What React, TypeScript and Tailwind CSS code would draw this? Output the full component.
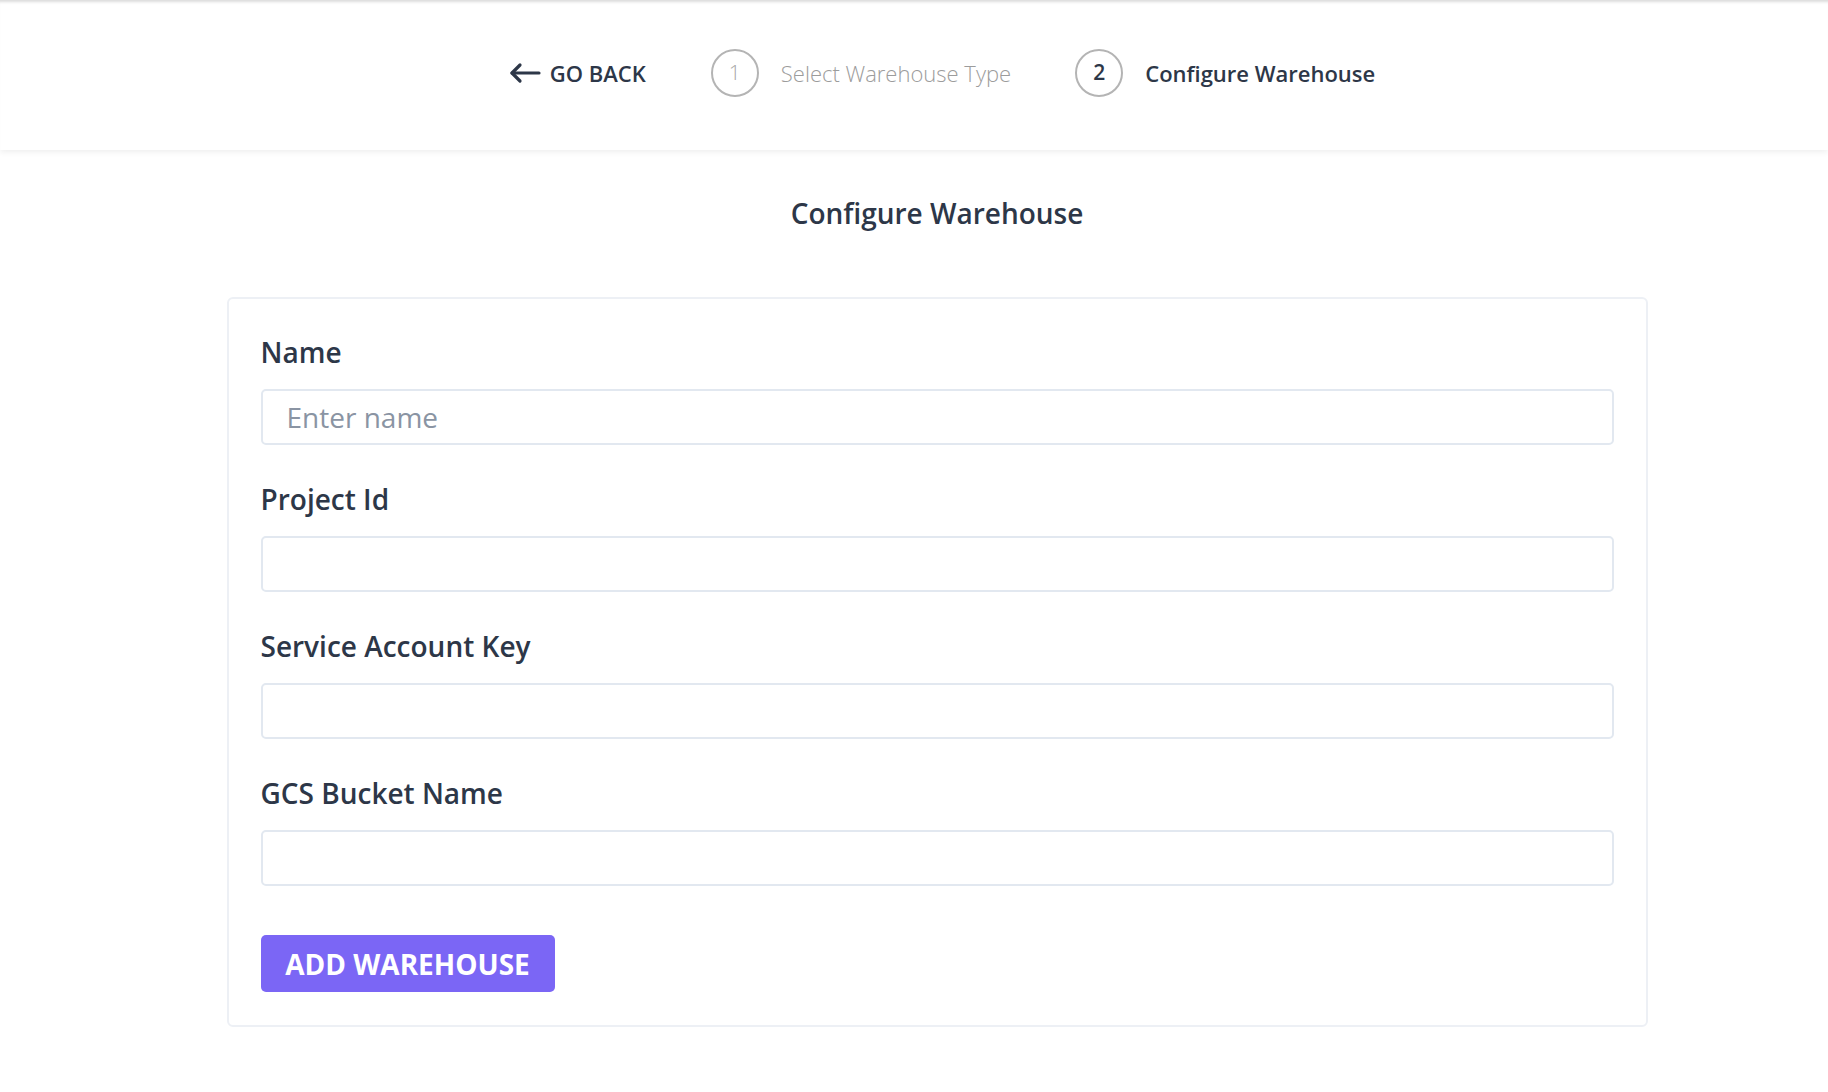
import React from "react";

const font = { fontFamily: '"Open Sans", "Noto Sans", sans-serif' };

function Field({ label, placeholder, last }: { label: string; placeholder?: string; last?: boolean }) {
  return (
    <div className={last ? "flex flex-col" : "flex flex-col mb-[36px]"}>
      <label className="h-[36px] leading-[36px] text-[28px] font-semibold text-[#2d3748] mb-[19px]">{label}</label>
      <input
        className="h-[56px] w-full rounded-[5px] border-2 border-[#e2e8f0] bg-white px-[24px] text-[28px] text-[#2d3748] placeholder:text-[#8a94a3] outline-none"
        placeholder={placeholder}
        style={font}
      />
    </div>
  );
}

export default function App() {
  return (
    <div className="min-h-[1092px] w-[1828px] bg-white" style={font}>
      <header className="h-[150px] w-full flex items-center justify-center pl-[56px] pb-[4px] shadow-[inset_0_4px_3px_-2px_rgba(0,0,0,0.14),0_2px_6px_rgba(0,0,0,0.07)]">
        <div className="flex items-center">
          <button className="flex items-center gap-[9px] text-[#2d3748]">
            <svg width="32" height="22" viewBox="0 0 32 22" fill="none" stroke="#2d3748" strokeWidth="3.2" strokeLinecap="round" strokeLinejoin="round">
              <path d="M3 11 H30" />
              <path d="M11 3 L3 11 L11 19" />
            </svg>
            <span className="text-[22px] font-semibold">GO BACK</span>
          </button>
          <div className="flex items-center ml-[65px]">
            <div className="w-[48px] h-[48px] rounded-full border-2 border-[#b4b4b4] flex items-center justify-center text-[21px] font-light text-[#a8a8a8]">1</div>
            <span className="ml-[22px] text-[22px] font-light text-[#9c9c9c]">Select Warehouse Type</span>
          </div>
          <div className="flex items-center ml-[64px]">
            <div className="w-[48px] h-[48px] rounded-full border-2 border-[#b4b4b4] flex items-center justify-center text-[21px] font-semibold text-[#2d3748]">2</div>
            <span className="ml-[22px] text-[22px] font-semibold text-[#2d3748]">Configure Warehouse</span>
          </div>
        </div>
      </header>
      <main className="pl-[46px] flex flex-col items-center">
        <h1 className="mt-[45px] h-[36px] leading-[36px] text-[28px] font-semibold text-[#2d3748]">Configure Warehouse</h1>
        <div className="mt-[66px] w-[1421px] rounded-[6px] border-2 border-[#edf0f5] px-[32px] pt-[35px] pb-[33px] flex flex-col">
          <Field label="Name" placeholder="Enter name" />
          <Field label="Project Id" />
          <Field label="Service Account Key" />
          <Field label="GCS Bucket Name" last />
          <div className="mt-[49px]">
            <button className="h-[57px] w-[294px] rounded-[5px] bg-[#7b66f5] text-white text-[28px] font-bold" style={font}>ADD WAREHOUSE</button>
          </div>
        </div>
      </main>
    </div>
  );
}
